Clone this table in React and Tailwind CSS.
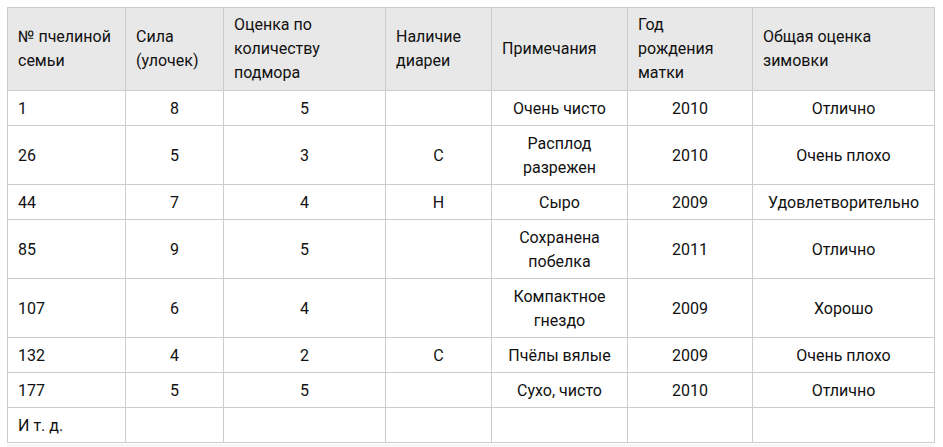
import React from "react";

const header = [
  ["№ пчелиной", "семьи"],
  ["Сила", "(улочек)"],
  ["Оценка по", "количеству", "подмора"],
  ["Наличие", "диареи"],
  ["Примечания"],
  ["Год", "рождения", "матки"],
  ["Общая оценка", "зимовки"],
];

const rows = [
  ["1", "8", "5", "", ["Очень чисто"], "2010", "Отлично"],
  ["26", "5", "3", "С", ["Расплод", "разрежен"], "2010", "Очень плохо"],
  ["44", "7", "4", "Н", ["Сыро"], "2009", "Удовлетворительно"],
  ["85", "9", "5", "", ["Сохранена", "побелка"], "2011", "Отлично"],
  ["107", "6", "4", "", ["Компактное", "гнездо"], "2009", "Хорошо"],
  ["132", "4", "2", "С", ["Пчёлы вялые"], "2009", "Очень плохо"],
  ["177", "5", "5", "", ["Сухо, чисто"], "2010", "Отлично"],
  ["И т. д.", "", "", "", [""], "", ""],
];

const widths = [118, 98, 162, 106, 136, 125, 182];

export default function App() {
  return (
    <div
      className="bg-white w-[943px] h-[447px] overflow-hidden pt-[7px] pl-[7px] text-[#111] text-[16px] leading-[24px]"
      style={{ fontFamily: "Roboto, 'Noto Sans', sans-serif" }}
    >
      <table className="table-fixed border-collapse w-[927px]">
        <colgroup>
          {widths.map((w, i) => (
            <col key={i} style={{ width: w }} />
          ))}
        </colgroup>
        <thead>
          <tr className="bg-[#e8e8e8]">
            {header.map((lines, i) => (
              <th
                key={i}
                className="border border-[#cccccc] px-[10px] py-[5px] text-left font-normal align-middle"
              >
                {lines.map((l, j) => (
                  <div key={j}>{l}</div>
                ))}
              </th>
            ))}
          </tr>
        </thead>
        <tbody>
          {rows.map((r, i) => (
            <tr key={i}>
              {r.map((c, j) => (
                <td
                  key={j}
                  className={
                    "border border-[#cccccc] pt-[6px] pb-[4px] align-middle whitespace-nowrap " +
                    (j === 0 ? "px-[10px] text-left" : "px-[2px] text-center")
                  }
                >
                  {Array.isArray(c)
                    ? c.map((l, k) => <div key={k}>{l || "\u00a0"}</div>)
                    : c || "\u00a0"}
                </td>
              ))}
            </tr>
          ))}
        </tbody>
      </table>
      <div className="mt-[1px] w-[927px] h-[10px] bg-[#f7f7f7]" />
    </div>
  );
}
